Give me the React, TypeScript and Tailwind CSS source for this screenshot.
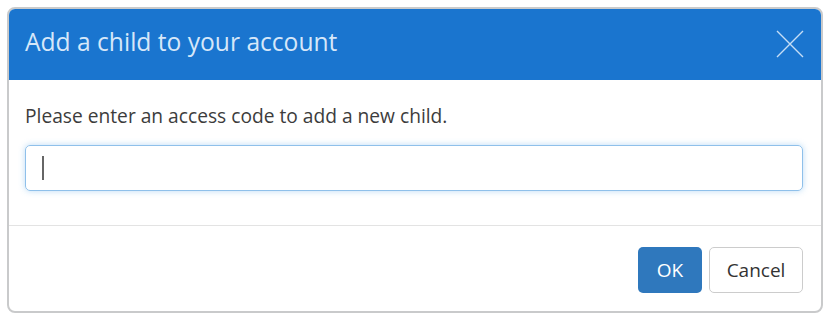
import React from "react";

export default function App() {
  return (
    <div className="w-[832px] h-[323px] bg-white pt-[7px] pl-[7px]" style={{ fontFamily: '"Open Sans", "Noto Sans", sans-serif' }}>
      <div className="w-[816px] h-[306px] border-2 border-[#c9cacb] rounded-[8px] overflow-hidden bg-white flex flex-col">
        <div className="h-[71px] bg-[#1a75cf] flex items-center justify-between pl-[16px] pr-[16px] shrink-0">
          <h1 className="text-[24.6px] text-[#d6e7f9] font-normal leading-none mt-[-4px]">Add a child to your account</h1>
          <svg width="30" height="30" viewBox="0 0 30 30" className="mt-[-2px]">
            <path d="M2 2 L28 28 M28 2 L2 28" stroke="#c5ddf6" strokeWidth="1.4" fill="none" />
          </svg>
        </div>
        <div className="pl-[16px] pr-[18px] pt-[23px] pb-[34px] border-b border-[#e3e3e3]">
          <p className="text-[19.2px] leading-[26px] text-[#3c3c3c]">Please enter an access code to add a new child.</p>
          <div className="mt-[16px] h-[46px] rounded-[5px] border border-[#8fc0ea] shadow-[0_0_6px_rgba(102,175,233,0.45)] flex items-center pl-[16px]">
            <div className="w-[2px] h-[24px] bg-[#666]" />
          </div>
        </div>
        <div className="flex-1 flex justify-end items-start pt-[21px] pr-[18px] gap-[7px]">
          <button className="w-[64px] h-[46px] rounded-[5px] bg-[#2f78bd] text-white text-[19px]">OK</button>
          <button className="w-[94px] h-[46px] rounded-[5px] bg-white border border-[#cccccc] text-[#333] text-[19px]">Cancel</button>
        </div>
      </div>
    </div>
  );
}
